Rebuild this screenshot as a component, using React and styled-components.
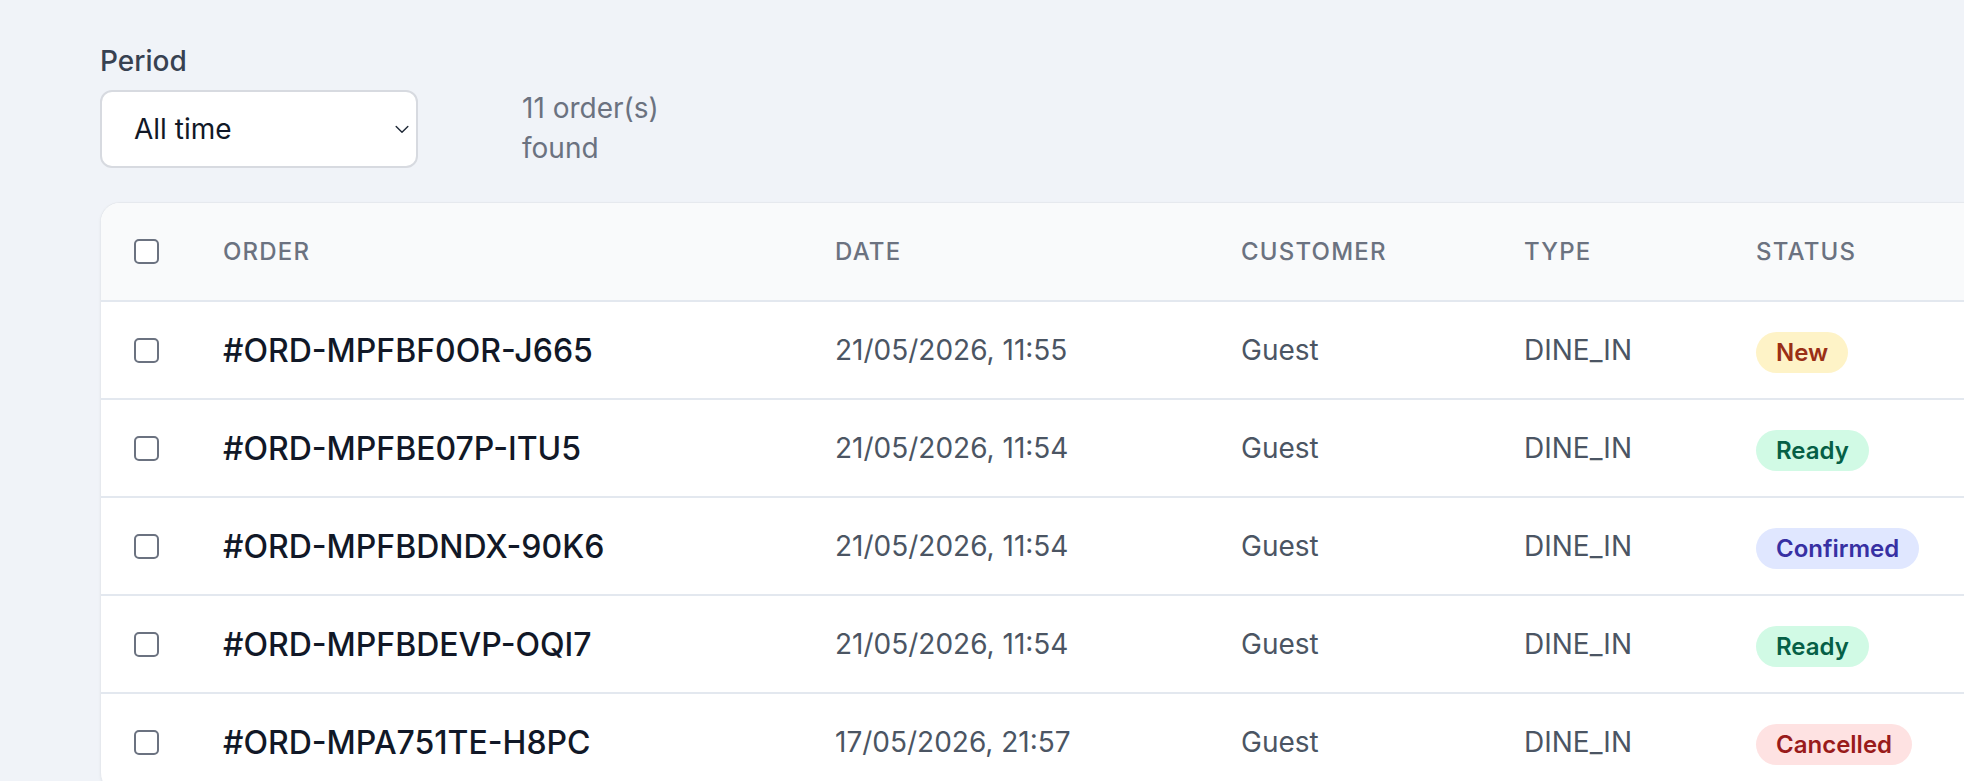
import React from 'react'
import styled, { createGlobalStyle } from 'styled-components'

const GlobalStyle = createGlobalStyle`
    html, body {
        margin: 0;
        padding: 0;
        overflow: hidden;
        background: #f0f3f8;
        font-family: Inter, "Noto Sans", "Liberation Sans", sans-serif;
    }
    * {
        box-sizing: border-box;
    }
`

const Page = styled.div`
    padding: 44px 0 0 100px;
    height: 781px;
`

const Filters = styled.div`
    display: flex;
    align-items: flex-end;
    margin-bottom: 34px;
`

const Field = styled.div`
    display: flex;
    flex-direction: column;
    gap: 11px;
`

const Label = styled.label`
    font-size: 28px;
    line-height: 35px;
    font-weight: 500;
    color: #374151;
`

const SelectWrap = styled.div`
    position: relative;
    width: 318px;
`

const Select = styled.select`
    appearance: none;
    width: 100%;
    height: 78px;
    padding: 0 40px 0 32px;
    font-family: inherit;
    font-size: 28px;
    color: #111827;
    background: #fff;
    border: 2px solid #d7dae0;
    border-radius: 12px;
    outline: none;
`

const Chevron = styled.svg`
    position: absolute;
    right: 6px;
    top: 50%;
    transform: translateY(-50%);
    pointer-events: none;
`

const Count = styled.div`
    width: 150px;
    margin-left: 104px;
    font-size: 28px;
    line-height: 40px;
    color: #6b7280;
`

const Card = styled.div`
    width: 2000px;
    background: #fff;
    border: 1px solid #e6e9ee;
    border-radius: 20px;
    overflow: hidden;
    box-shadow: 0 1px 3px rgba(15, 23, 42, 0.05);
`

const Table = styled.table`
    width: 100%;
    table-layout: fixed;
    border-collapse: collapse;
`

const HeadCell = styled.th`
    height: 98px;
    padding: 0;
    padding-left: ${(p) => (p.$check ? '33px' : '0')};
    text-align: left;
    vertical-align: middle;
    background: #f9fafb;
    border-bottom: 2px solid #e3e8ef;
    font-size: 24px;
    font-weight: 500;
    letter-spacing: 0.05em;
    text-transform: uppercase;
    color: #6b7280;
`

const Row = styled.tr`
    border-bottom: 2px solid #e3e8ef;
`

const Cell = styled.td`
    height: 98px;
    padding: 0;
    padding-left: ${(p) => (p.$check ? '33px' : '0')};
    vertical-align: middle;
    font-size: ${(p) => (p.$strong ? '32px' : '28px')};
    color: ${(p) => (p.$strong ? '#111827' : '#4b5563')};
    font-weight: ${(p) => (p.$strong ? 500 : 400)};
    white-space: nowrap;
`

const Check = styled.input.attrs({ type: 'checkbox' })`
    appearance: none;
    display: block;
    width: 25px;
    height: 25px;
    margin: 0;
    border: 2px solid #6b7280;
    border-radius: 5px;
    background: #fff;
`

const badgeColors = {
    New: { bg: '#fef3c7', fg: '#9a2f16' },
    Ready: { bg: '#d1fae5', fg: '#065f46' },
    Confirmed: { bg: '#e0e7ff', fg: '#3730a3' },
    Cancelled: { bg: '#fee2e2', fg: '#991b1b' },
}

const Badge = styled.span`
    display: inline-block;
    margin-top: 5px;
    padding: 4px 20px;
    border-radius: 999px;
    font-size: 24px;
    line-height: 33px;
    font-weight: 600;
    background: ${(p) => badgeColors[p.$status].bg};
    color: ${(p) => badgeColors[p.$status].fg};
`

const orders = [
    { id: '#ORD-MPFBF0OR-J665', date: '21/05/2026, 11:55', status: 'New' },
    { id: '#ORD-MPFBE07P-ITU5', date: '21/05/2026, 11:54', status: 'Ready' },
    { id: '#ORD-MPFBDNDX-90K6', date: '21/05/2026, 11:54', status: 'Confirmed' },
    { id: '#ORD-MPFBDEVP-OQI7', date: '21/05/2026, 11:54', status: 'Ready' },
    { id: '#ORD-MPA751TE-H8PC', date: '17/05/2026, 21:57', status: 'Cancelled' },
]

export default function App() {
    return (
        <Page>
            <GlobalStyle />
            <Filters>
                <Field>
                    <Label>Period</Label>
                    <SelectWrap>
                        <Select defaultValue="all">
                            <option value="all">All time</option>
                            <option value="today">Today</option>
                            <option value="week">This week</option>
                        </Select>
                        <Chevron width="20" height="20" viewBox="0 0 24 24" fill="none" stroke="#1f2937" strokeWidth="1.7" strokeLinecap="round" strokeLinejoin="round">
                            <path d="M5 9l7 7 7-7" />
                        </Chevron>
                    </SelectWrap>
                </Field>
                <Count>11 order(s) found</Count>
            </Filters>
            <Card>
                <Table>
                    <colgroup>
                        <col style={{ width: 122 }} />
                        <col style={{ width: 612 }} />
                        <col style={{ width: 406 }} />
                        <col style={{ width: 283 }} />
                        <col style={{ width: 232 }} />
                        <col />
                    </colgroup>
                    <thead>
                        <tr>
                            <HeadCell $check><Check /></HeadCell>
                            <HeadCell>Order</HeadCell>
                            <HeadCell>Date</HeadCell>
                            <HeadCell>Customer</HeadCell>
                            <HeadCell>Type</HeadCell>
                            <HeadCell>Status</HeadCell>
                        </tr>
                    </thead>
                    <tbody>
                        {orders.map((o) => (
                            <Row key={o.id}>
                                <Cell $check><Check /></Cell>
                                <Cell $strong>{o.id}</Cell>
                                <Cell>{o.date}</Cell>
                                <Cell>Guest</Cell>
                                <Cell>DINE_IN</Cell>
                                <Cell><Badge $status={o.status}>{o.status}</Badge></Cell>
                            </Row>
                        ))}
                    </tbody>
                </Table>
            </Card>
        </Page>
    )
}
